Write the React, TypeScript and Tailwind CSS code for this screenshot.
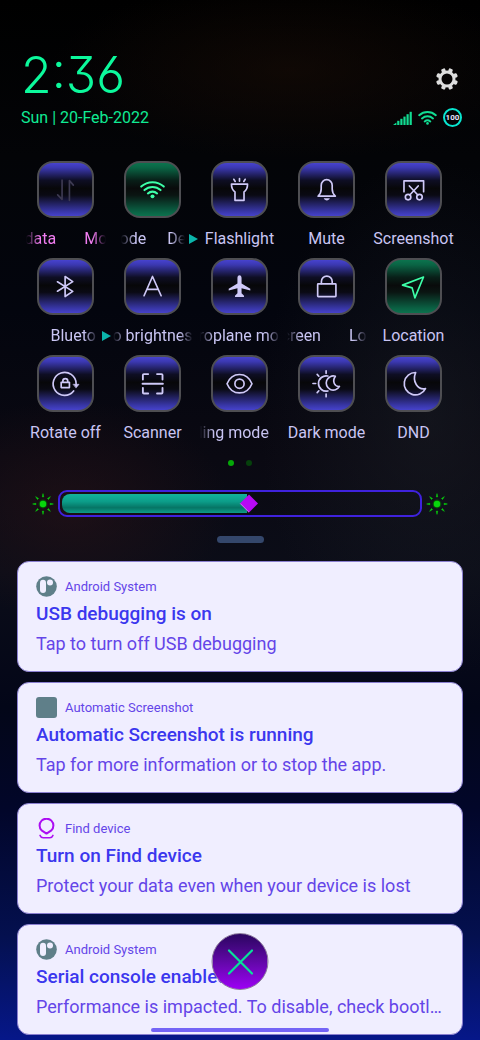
import { useState, type ReactNode } from "react";

type Tone = "idle" | "active" | "disabled";

interface Ticker {
  parts: string[];
  offset: number;
}

interface Tile {
  id: string;
  label: string;
  tone?: Tone;
  expandable?: boolean;
  ticker?: Ticker;
  icon: ReactNode;
}

const tiles: Tile[] = [
  {
    id: "data",
    label: "Mobile data",
    tone: "disabled",
    ticker: { parts: ["data", "Mo"], offset: -1 },
    icon: (
      <>
        <path d="M25.5 19.5V39L21 34.5" />
        <path d="M33 40V20L37 24.5" />
      </>
    ),
  },
  {
    id: "wifi",
    label: "Wi-Fi",
    tone: "active",
    expandable: true,
    ticker: { parts: ["ode", "De"], offset: -1 },
    icon: (
      <>
        <path d="M17.5 26a17 17 0 0 1 23 0" strokeWidth="2.1" />
        <path d="M20.8 29.6a12 12 0 0 1 16.4 0" strokeWidth="2.1" />
        <path d="M24.3 33a7 7 0 0 1 9.4 0" strokeWidth="2.1" />
        <circle cx="29" cy="36" r="2" fill="currentColor" stroke="none" />
      </>
    ),
  },
  {
    id: "flashlight",
    label: "Flashlight",
    icon: (
      <>
        <path d="M20.8 23.5H37.2C37.2 28 36 30 33.6 31.5V40H24.4V31.5C22 30 20.8 28 20.8 23.5Z" />
        <path d="M29 17.8V20.6M23.2 18.6L24.6 20.8M34.8 18.6L33.4 20.8" />
      </>
    ),
  },
  {
    id: "mute",
    label: "Mute",
    icon: (
      <>
        <path d="M20.5 35.8C22.8 33.6 23.6 31.5 23.6 28.5V24.8A5.6 5.8 0 0 1 34.8 24.8V28.5C34.8 31.5 35.6 33.6 38 35.8Z" />
        <path d="M26.2 38H32.4C31.4 40.8 27.2 40.8 26.2 38Z" fill="currentColor" stroke="none" />
      </>
    ),
  },
  {
    id: "screenshot",
    label: "Screenshot",
    icon: (
      <>
        <path d="M19.3 31.3V20.2H39.3V31.3" />
        <circle cx="23.5" cy="36.7" r="2.8" />
        <circle cx="35.1" cy="36.7" r="2.8" />
        <path d="M24.8 25.4L33.4 34.6M33.8 25.4L25.2 34.6" />
      </>
    ),
  },
  {
    id: "bluetooth",
    label: "Bluetooth",
    expandable: true,
    ticker: { parts: ["Blueto"], offset: 17 },
    icon: <path d="M20.8 24.2L36.4 34L28.6 39.2V18.8L36.4 24L20.8 33.8" />,
  },
  {
    id: "auto-brightness",
    label: "Auto brightness",
    ticker: { parts: ["o brightnes"], offset: 0 },
    icon: <path d="M20.4 38.4L29 18.8L37.8 38.4M23.2 32H35" />,
  },
  {
    id: "aeroplane",
    label: "Aeroplane mode",
    ticker: { parts: ["roplane mo"], offset: -1 },
    icon: (
      <path
        d="M29 17.5C30.3 17.5 31.1 18.8 31.1 20.4V26L40 31.2V33L31.1 30.8V36L33.6 38.4V39.8H24.4V38.4L26.9 36V30.8L18 33V31.2L26.9 26V20.4C26.9 18.8 27.7 17.5 29 17.5Z"
        fill="currentColor"
        stroke="none"
      />
    ),
  },
  {
    id: "lock",
    label: "Lock screen",
    ticker: { parts: ["creen", "Lo"], offset: -5 },
    icon: (
      <>
        <rect x="20" y="26.4" width="18.6" height="13" rx="0.6" />
        <path d="M23.8 26V24A5.5 5.6 0 0 1 34.8 24V26" />
      </>
    ),
  },
  {
    id: "location",
    label: "Location",
    tone: "active",
    icon: <path d="M39.2 19.3L17.8 27.6L27.6 30.4L30.4 40.6Z" />,
  },
  {
    id: "rotate",
    label: "Rotate off",
    icon: (
      <>
        <path d="M37.3 36.6A11.7 11.7 0 1 1 39.8 29V30.5" />
        <path d="M37 29.8H42.8L39.9 33.4Z" fill="currentColor" strokeWidth="0.6" />
        <rect x="24.6" y="27.8" width="8.4" height="5.4" />
        <path d="M26.3 27.5V26.4A2.5 2.4 0 0 1 31.3 26.4V27.5" />
      </>
    ),
  },
  {
    id: "scanner",
    label: "Scanner",
    icon: (
      <>
        <path d="M19.2 25V20.4Q19.2 19.4 20.2 19.4H24.6M33.6 19.4H38.2Q39.2 19.4 39.2 20.4V25M39.2 33.4V38.2Q39.2 39.2 38.2 39.2H33.6M24.6 39.2H20.2Q19.2 39.2 19.2 38.2V33.4" strokeWidth="1.9" />
        <path d="M18.8 29.2H39.6" strokeWidth="1.9" />
      </>
    ),
  },
  {
    id: "reading",
    label: "Reading mode",
    ticker: { parts: ["ding mode"], offset: -6 },
    icon: (
      <>
        <path d="M16.3 29.2C18.6 23.6 23.4 19.8 29 19.8S39.4 23.6 41.7 29.2C39.4 34.8 34.6 38.6 29 38.6S18.6 34.8 16.3 29.2Z" />
        <circle cx="29" cy="29.2" r="4.7" />
      </>
    ),
  },
  {
    id: "dark",
    label: "Dark mode",
    icon: (
      <>
        <path d="M30.4 21.4A7.8 7.8 0 1 0 30.4 36.6" />
        <path d="M38 21.6A7.2 7.2 0 1 0 42.2 32C37.4 32.4 34.4 27 38 21.6Z" />
        <path d="M28.6 16V18.6M28.6 39.8V42.4M15.2 29H18M19.5 19.7L21.2 21.6M19.5 38.3L21.2 36.4" />
      </>
    ),
  },
  {
    id: "dnd",
    label: "DND",
    icon: <path d="M31.2 17.8A11.4 11.4 0 1 0 41.2 34.2C33.2 35.8 27.4 27 31.2 17.8Z" />,
  },
];

const tileFace: Record<Tone, string> = {
  idle: "text-[#cfc9f8] bg-[linear-gradient(180deg,#4c47dc_0%,#3b38b0_12%,#0e0e24_34%,#070709_48%,#0a0a14_60%,#3836a6_88%,#4c47dc_100%)]",
  disabled:
    "text-[#3d3a52] bg-[linear-gradient(180deg,#4c47dc_0%,#3b38b0_12%,#0e0e24_34%,#070709_48%,#0a0a14_60%,#3836a6_88%,#4c47dc_100%)]",
  active:
    "text-[#3dffa8] bg-[linear-gradient(180deg,#0c7a52_0%,#0a6444_12%,#081f18_34%,#090b0b_48%,#0a1512_60%,#0a6043_88%,#0c7a52_100%)]",
};

function TickerLabel({ ticker, narrow }: { ticker: Ticker; narrow?: boolean }) {
  return (
    <span
      className={`flex overflow-hidden whitespace-nowrap [mask-image:linear-gradient(90deg,transparent,#000_14px,#000_calc(100%-14px),transparent)] ${
        narrow ? "w-16 gap-[21px]" : "w-20 gap-[28px]"
      }`}
    >
      {ticker.parts.map((part, i) => (
        <span key={part} className="shrink-0" style={{ marginLeft: i === 0 ? ticker.offset : 0 }}>
          {part}
        </span>
      ))}
    </span>
  );
}

function QuickTile({ tile }: { tile: Tile }) {
  const tone = tile.tone ?? "idle";
  return (
    <button
      type="button"
      aria-label={tile.label}
      aria-pressed={tone === "active"}
      className="flex flex-col items-center gap-[9px]"
    >
      <span className={`size-[57px] rounded-2xl border-2 border-[#4e4e52] bg-origin-border ${tileFace[tone]}`}>
        <svg
          viewBox="2 2 54 54"
          className="size-full"
          fill="none"
          stroke="currentColor"
          strokeWidth="1.7"
          strokeLinecap="round"
          strokeLinejoin="round"
        >
          {tile.icon}
        </svg>
      </span>
      <span
        className={`relative flex h-6 items-center justify-center text-base leading-6 whitespace-nowrap ${
          tone === "disabled" ? "text-[#f07df0]" : "text-[#c9c5f3]"
        }`}
      >
        {tile.ticker ? <TickerLabel ticker={tile.ticker} narrow={tile.expandable} /> : tile.label}
        {tile.expandable && (
          <svg viewBox="0 0 9 10" className="absolute left-full ml-1 h-2.5 w-[9px]">
            <path d="M0 0L9 5L0 10Z" fill="#0bb5ab" />
          </svg>
        )}
      </span>
    </button>
  );
}

function SunIcon() {
  return (
    <svg viewBox="0 0 22 22" className="size-[22px] shrink-0">
      <circle cx="11" cy="11" r="4.4" fill="#064f08" />
      <circle cx="11" cy="11" r="3.2" fill="#08d60c" />
      {[0, 45, 90, 135, 180, 225, 270, 315].map((angle) => (
        <path key={angle} d="M10.3 3.9L11 0.6L11.7 3.9Z" fill="#08d60c" stroke="#08d60c" strokeWidth="0.5" transform={`rotate(${angle} 11 11)`} />
      ))}
    </svg>
  );
}

function Brightness() {
  const [value, setValue] = useState(52);
  return (
    <div className="flex items-center gap-1 px-8">
      <SunIcon />
      <label className="relative block h-[27px] flex-1 rounded-[9px] border-2 border-[#3f22dd] p-0.5">
        <span
          className="relative block h-full rounded-l-[8px] bg-[linear-gradient(180deg,#12b39d_0%,#0c9d89_40%,#067565_72%,#0d9c88_100%)]"
          style={{ width: `${value}%` }}
        >
          <svg viewBox="0 0 20 20" className="absolute top-0 -right-3 h-full w-5">
            <path d="M10 0.5L19.5 10L10 19.5L0.5 10Z" fill="#b80af5" />
            <path d="M0.8 10L10 19.2" stroke="#d97cf0" strokeWidth="1" />
          </svg>
        </span>
        <input
          type="range"
          aria-label="Brightness"
          min={0}
          max={100}
          value={value}
          onChange={(e) => setValue(Number(e.target.value))}
          className="absolute inset-0 size-full cursor-pointer opacity-0"
        />
      </label>
      <SunIcon />
    </div>
  );
}

function AndroidIcon() {
  return (
    <svg viewBox="0 0 21 21" className="size-[21px]">
      <circle cx="10.5" cy="10.5" r="10.3" fill="#5f7f89" />
      <rect x="4" y="3.8" width="6" height="13.2" rx="3" fill="#f0eeff" />
      <circle cx="14" cy="6.6" r="3" fill="#f0eeff" />
    </svg>
  );
}

function FindIcon() {
  return (
    <svg viewBox="0 0 21 21" className="size-[21px]" fill="none" stroke="#ac0df2" strokeWidth="2" strokeLinecap="round" strokeLinejoin="round">
      <path d="M10.5 15.6L5.6 12.4A6.9 6.9 0 1 1 15.4 12.4Z" />
      <path d="M4 17.4C4.6 18.9 5.6 19.8 7.2 19.8H13.8C15.4 19.8 16.4 18.9 17 17.4" strokeWidth="1.5" />
    </svg>
  );
}

const notifications = [
  { id: 1, app: "Android System", title: "USB debugging is on", body: "Tap to turn off USB debugging", icon: <AndroidIcon /> },
  {
    id: 2,
    app: "Automatic Screenshot",
    title: "Automatic Screenshot is running",
    body: "Tap for more information or to stop the app.",
    icon: <span className="block size-[21px] rounded-[3px] bg-[#5f7f89]" />,
  },
  { id: 3, app: "Find device", title: "Turn on Find device", body: "Protect your data even when your device is lost", icon: <FindIcon /> },
  {
    id: 4,
    app: "Android System",
    title: "Serial console enabled",
    body: "Performance is impacted. To disable, check bootloader",
    icon: <AndroidIcon />,
  },
];

function StatusIcons() {
  return (
    <div className="flex items-center gap-1.5">
      <svg viewBox="0 0 19 14" className="h-3.5 w-[19px]" fill="#12dc92">
        <path d="M0 14L3.4 11.4V14Z" />
        <rect x="4.2" y="9.8" width="2.2" height="4.2" />
        <rect x="7.3" y="7.8" width="2.2" height="6.2" />
        <rect x="10.4" y="5.6" width="2.2" height="8.4" />
        <rect x="13.5" y="3.2" width="2.2" height="10.8" />
        <rect x="16.6" y="0.8" width="2.2" height="13.2" />
      </svg>
      <svg viewBox="0 0 19 15" className="h-[15px] w-[19px]" fill="none" stroke="#12dc92" strokeWidth="2" strokeLinecap="round">
        <path d="M1.2 5.2a12.5 12.5 0 0 1 16.6 0" />
        <path d="M4 8.4a8.4 8.4 0 0 1 11 0" />
        <path d="M6.7 11.4a4.4 4.4 0 0 1 5.6 0" />
        <circle cx="9.5" cy="13.4" r="1.3" fill="#12dc92" stroke="none" />
      </svg>
      <span className="flex size-[19px] items-center justify-center rounded-full border-2 border-[#08e6d0] text-[8px] leading-none font-bold text-[#e8e4ff]">
        100
      </span>
    </div>
  );
}

export default function App() {
  return (
    <main className="relative min-h-screen overflow-hidden bg-[radial-gradient(ellipse_160px_110px_at_70px_510px,#2a131790,transparent),radial-gradient(ellipse_170px_260px_at_430px_420px,#1c1f2680,transparent),radial-gradient(ellipse_240px_90px_at_290px_70px,#1a0d0690,transparent),linear-gradient(180deg,#000_0%,#030407_15%,#03050e_30%,#0a0912_44%,#0b0d18_55%,#030618_68%,#02062a_78%,#04104f_90%,#061789_100%)] pt-[52px] pb-1 font-[Roboto,sans-serif]">
      <header className="flex items-end justify-between pr-[18px] pl-[21px]">
        <div>
          <time className="block h-[46px] text-[50px] leading-[46px] font-light text-[#0cf99c] [font-family:Inter,sans-serif] [font-feature-settings:'cv03','cv09']">
            2:36
          </time>
          <p className="mt-2 text-base leading-6 text-[#10ea94]">Sun | 20-Feb-2022</p>
        </div>
        <div className="flex flex-col items-end gap-[18px] pb-[3px]">
          <button type="button" aria-label="Settings" className="mr-1">
            <svg viewBox="0 0 22 22" className="block size-[22px]">
              <circle cx="11" cy="11" r="7" fill="none" stroke="#dedede" strokeWidth="3" />
              {[22.5, 67.5, 112.5, 157.5, 202.5, 247.5, 292.5, 337.5].map((angle) => (
                <rect key={angle} x="8.9" y="0" width="4.2" height="3.6" rx="1.2" fill="#dedede" transform={`rotate(${angle} 11 11)`} />
              ))}
            </svg>
          </button>
          <StatusIcons />
        </div>
      </header>

      <section aria-label="Quick settings" className="mt-[31px] grid grid-cols-5 gap-y-[7px] pr-[23px] pl-[22px]">
        {tiles.map((tile) => (
          <QuickTile key={tile.id} tile={tile} />
        ))}
      </section>

      <div className="mt-[15px] flex justify-center gap-3">
        <span className="size-1.5 rounded-full bg-[#05a808]" />
        <span className="size-1.5 rounded-full bg-[#06400c]" />
      </div>

      <div className="mt-6">
        <Brightness />
      </div>
      <div className="mx-auto mt-[19px] h-[7px] w-[47px] rounded-full bg-[#34476b]" />

      <section aria-label="Notifications" className="mt-[18px] flex flex-col gap-2.5 px-[17px]">
        {notifications.map((n) => (
          <article key={n.id} className="rounded-xl border border-[#8a7fd0] bg-[#f0eeff] px-[18px] pt-[14px] pb-[13px]">
            <div className="flex items-center gap-2 text-[13px] leading-[21px] text-[#6445e8]">
              {n.icon}
              <span>{n.app}</span>
            </div>
            <h2 className="mt-[3px] text-[19px] leading-7 font-medium text-[#3b37ee]">{n.title}</h2>
            <p className="mt-0.5 truncate text-lg leading-7 text-[#6445e8]">{n.body}</p>
          </article>
        ))}
      </section>

      <button
        type="button"
        aria-label="Clear notifications"
        className="absolute bottom-[50px] left-1/2 flex size-[57px] -translate-x-1/2 items-center justify-center rounded-full border border-[#8c7a9c] bg-linear-to-b from-[#2b0560] to-[#9d00f5]"
      >
        <svg viewBox="0 0 26 26" className="size-[26px]" stroke="#08e29a" strokeWidth="2.2" strokeLinecap="round">
          <path d="M1.5 1.5L24.5 24.5M24.5 1.5L1.5 24.5" />
        </svg>
      </button>
      <div className="absolute bottom-2 left-1/2 h-1 w-[178px] -translate-x-1/2 rounded-full bg-[#7464f6]" />
    </main>
  );
}
